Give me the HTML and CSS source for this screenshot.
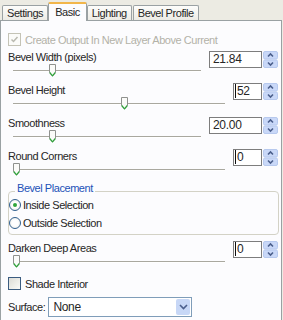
FILE: index.html
```html
<!DOCTYPE html>
<html lang="en">
<head>
    <meta charset="UTF-8">
    <title>Bevel - Basic</title>
    <link rel="stylesheet" href="styles.css">
</head>
<body>
    <svg class="defs" width="0" height="0">
        <symbol id="spin" viewBox="0 0 15 17">
            <rect x="0.5" y="0.5" width="14" height="7.5" rx="1.5" fill="#c9d8f8" stroke="#b7c9ee"/>
            <rect x="0.5" y="9" width="14" height="7.5" rx="1.5" fill="#c9d8f8" stroke="#b7c9ee"/>
            <path d="M5 5.5 L7.5 3 L10 5.5" fill="none" stroke="#4b5f8c" stroke-width="1.6"/>
            <path d="M5 11.5 L7.5 14 L10 11.5" fill="none" stroke="#4b5f8c" stroke-width="1.6"/>
        </symbol>
        <symbol id="thumb" viewBox="0 0 7 13">
            <path d="M0.5 0.5 H6.5 V8.5 L3.5 12 L0.5 8.5 Z" fill="#fbfbf9" stroke="#8f918e"/>
            <path d="M0.7 8.5 L3.5 11.8 L6.3 8.5" fill="none" stroke="#2fa33a" stroke-width="1.2"/>
        </symbol>
    </svg>

    <div class="tabs">
        <div class="tab">Settings</div>
        <div class="tab active">Basic</div>
        <div class="tab">Lighting</div>
        <div class="tab">Bevel Profile</div>
    </div>

    <div class="panel">
        <div class="check disabled">
            <span class="box"><svg width="9" height="9" viewBox="0 0 9 9"><path d="M1.5 4.5 L3.5 6.5 L7.5 2" fill="none" stroke="#b9b9b0" stroke-width="1.5"/></svg></span>
            Create Output In New Layer Above Current
        </div>

        <div class="field">
            <div class="field-main">
                <div class="label">Bevel Width (pixels)</div>
                <div class="slider"><div class="track"></div><svg class="thumb" style="left: 19%"><use href="#thumb"/></svg></div>
            </div>
            <div class="spin wide">
                <div class="input">21.84</div>
                <svg class="spin-btns"><use href="#spin"/></svg>
            </div>
        </div>

        <div class="field">
            <div class="field-main">
                <div class="label">Bevel Height</div>
                <div class="slider"><div class="track"></div><svg class="thumb" style="left: 51%"><use href="#thumb"/></svg></div>
            </div>
            <div class="spin narrow">
                <div class="input"><span class="caret">52</span></div>
                <svg class="spin-btns"><use href="#spin"/></svg>
            </div>
        </div>

        <div class="field">
            <div class="field-main">
                <div class="label">Smoothness</div>
                <div class="slider"><div class="track"></div><svg class="thumb" style="left: 19%"><use href="#thumb"/></svg></div>
            </div>
            <div class="spin wide">
                <div class="input">20.00</div>
                <svg class="spin-btns"><use href="#spin"/></svg>
            </div>
        </div>

        <div class="field">
            <div class="field-main">
                <div class="label">Round Corners</div>
                <div class="slider"><div class="track"></div><svg class="thumb" style="left: 0%"><use href="#thumb"/></svg></div>
            </div>
            <div class="spin narrow">
                <div class="input"><span class="caret">0</span></div>
                <svg class="spin-btns"><use href="#spin"/></svg>
            </div>
        </div>

        <div class="group">
            <div class="legend">Bevel Placement</div>
            <div class="radio"><span class="dot on"></span>Inside Selection</div>
            <div class="radio"><span class="dot"></span>Outside Selection</div>
        </div>

        <div class="field after-group">
            <div class="field-main">
                <div class="label">Darken Deep Areas</div>
                <div class="slider"><div class="track"></div><svg class="thumb" style="left: 0%"><use href="#thumb"/></svg></div>
            </div>
            <div class="spin narrow">
                <div class="input"><span class="caret">0</span></div>
                <svg class="spin-btns"><use href="#spin"/></svg>
            </div>
        </div>

        <div class="check plain">
            <span class="box"></span>
            Shade Interior
        </div>

        <div class="surface">
            <span>Surface:</span>
            <div class="select">
                <span class="value">None</span>
                <span class="arrow"><svg width="9" height="6" viewBox="0 0 9 6"><path d="M1 1 L4.5 4.5 L8 1" fill="none" stroke="#4b5f8c" stroke-width="1.6"/></svg></span>
            </div>
        </div>
    </div>
</body>
</html>
```

FILE: styles.css
```css
body {
    margin: 0;
    background: #ecebe3;
    font-family: "Liberation Sans", Arial, sans-serif;
    font-size: 11px;
    letter-spacing: -0.45px;
    color: #262626;
    width: 283px;
    height: 320px;
    overflow: hidden;
}

.defs {
    position: absolute;
}

.tabs {
    display: flex;
    align-items: flex-end;
    height: 20px;
    padding-left: 2px;
}

.tab {
    height: 14px;
    line-height: 14px;
    padding: 0 4px;
    margin-right: 1px;
    border: 1px solid #9aa1a3;
    border-bottom: none;
    border-radius: 2px 2px 0 0;
    background: linear-gradient(#fdfdfb, #ecebe5);
}

.tab.active {
    height: 17px;
    line-height: 16px;
    padding: 0 6px;
    margin: 0 0 -1px -1px;
    background: #fcfcfe;
    border-top: 2px solid #f2b64a;
    position: relative;
    z-index: 1;
}

.panel {
    width: 270px;
    height: 287px;
    background: #fcfcfe;
    border: 1px solid #9aa1a3;
    border-bottom: none;
    padding: 12px 3px 0 7px;
}

.check {
    display: flex;
    align-items: center;
    height: 13px;
    gap: 4px;
}

.check .box {
    width: 11px;
    height: 11px;
    border: 1px solid #1f4f7d;
    background: linear-gradient(135deg, #dcdcd6, #fbfbf8);
    display: flex;
    align-items: center;
    justify-content: center;
}

.check.disabled {
    color: #b3b2a8;
}

.check.disabled .box {
    border-color: #c4c3b6;
    background: #fbfbf9;
}

.check.plain {
    margin-top: 3px;
}

.check.plain .box {
    border-color: #3b5c80;
}

.field {
    display: flex;
    align-items: flex-start;
    gap: 8px;
    margin-top: 4px;
    height: 29px;
    padding-bottom: 4px;
}

.field + .field {
    margin-top: 0;
}

.field.after-group {
    margin-top: 6px;
}

.field-main {
    flex: 1;
}

.label {
    height: 14px;
    line-height: 14px;
}

.slider {
    position: relative;
    height: 14px;
    margin-left: 5px;
}

.track {
    position: absolute;
    left: 0;
    right: 0;
    top: 6px;
    height: 1px;
    background: #a9a89f;
    border-bottom: 1px solid #fff;
}

.thumb {
    position: absolute;
    top: 0;
    width: 7px;
    height: 13px;
}

.spin {
    display: flex;
    gap: 1px;
}

.spin.wide {
    margin-top: 1px;
}

.spin.wide .input {
    width: 48px;
}

.spin.narrow .input {
    width: 24px;
}

.input {
    height: 15px;
    line-height: 15px;
    border: 1px solid #7d7d7d;
    background: #fff;
    padding-left: 3px;
    font-size: 12px;
    letter-spacing: -0.3px;
}

.caret {
    border-left: 1px solid #111;
    padding-left: 1px;
    margin-left: -2px;
}

.spin-btns {
    width: 15px;
    height: 17px;
}

.group {
    margin-top: 9px;
    margin-right: -1px;
    border: 1px solid #d3d2c6;
    border-radius: 4px;
    padding: 0 0 4px 0;
}

.legend {
    margin: -11px 0 0 6px;
    padding: 0 2px;
    background: #fcfcfe;
    width: max-content;
    color: #1d52b8;
    line-height: 14px;
}

.radio {
    display: flex;
    align-items: center;
    gap: 2px;
    height: 14px;
    margin-top: 3px;
}

.radio + .radio {
    margin-top: 4px;
}

.dot {
    width: 10px;
    height: 10px;
    border: 1px solid #305f8e;
    border-radius: 50%;
    background: radial-gradient(circle, #fff 40%, #e6e6e0);
    display: flex;
    align-items: center;
    justify-content: center;
}

.dot.on::after {
    content: "";
    width: 4px;
    height: 4px;
    border-radius: 50%;
    background: #31a63c;
}

.surface {
    display: flex;
    align-items: center;
    gap: 3px;
    margin-top: 7px;
}

.select {
    display: flex;
    align-items: center;
    justify-content: space-between;
    width: 137px;
    height: 18px;
    border: 1px solid #7f9db9;
    background: #fff;
    padding: 0 1px 0 4px;
    font-size: 12px;
    letter-spacing: -0.3px;
}

.arrow {
    width: 14px;
    height: 16px;
    border-radius: 2px;
    background: #c7d7f6;
    display: flex;
    align-items: center;
    justify-content: center;
}
```
